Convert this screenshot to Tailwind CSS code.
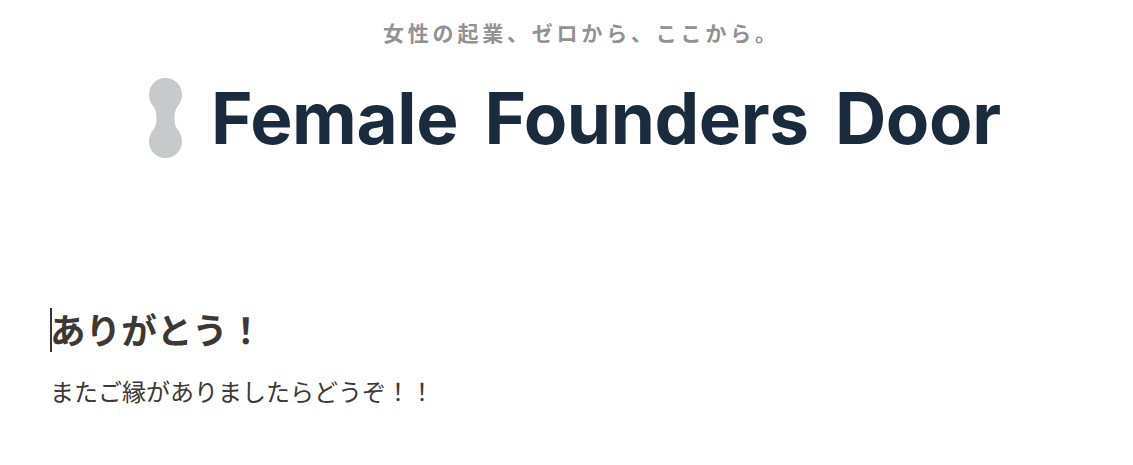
<!DOCTYPE html>
<html lang="ja"><head><meta charset="utf-8"><script src="https://cdn.jsdelivr.net/npm/@tailwindcss/browser@4"></script></head>
<body class="bg-white overflow-hidden">
<div class="w-[1133px] h-[465px] flex flex-col font-['Liberation_Sans','Noto_Sans_CJK_JP',sans-serif]">
  <header class="flex flex-col pl-[149px] h-[308px]">
    <p class="ml-[234px] pt-[20px] h-[78px] text-[21px] leading-[28px] font-bold tracking-[3.8px] text-[#929292] whitespace-nowrap">女性の起業、ゼロから、ここから。</p>
    <div class="flex items-center gap-[29px] h-[80px]">
      <svg class="w-[33px] h-[80px] shrink-0" viewBox="0 0 33 80"><path fill="#c8c9cb" d="M16.500 0C7.400 0 0 7.400 0 16.500C0 22 2.400 25.800 4.500 28.400C6.500 31 7.500 35 7.500 40C7.500 45 6.500 49 4.500 51.600C2.400 54.200 0 58 0 63.500C0 72.600 7.400 80 16.500 80S33 72.600 33 63.500C33 58 30.600 54.200 28.500 51.600C26.500 49 25.500 45 25.500 40C25.500 35 26.500 31 28.500 28.400C30.600 25.800 33 22 33 16.500C33 7.400 25.600 0 16.500 0Z"/></svg>
      <span class="font-['Inter',sans-serif] text-[71px] leading-[80px] font-bold tracking-[-0.4px] [word-spacing:10px] text-[#1a2b3e] whitespace-nowrap">Female Founders Door</span>
    </div>
  </header>
  <main class="pl-[50px]">
    <h1 class="border-l-2 border-[#3a3530] h-[44px] text-[35.6px] leading-[44px] [text-indent:-2px] pt-[2px] font-bold text-[#3c3833] whitespace-nowrap">ありがとう！</h1>
    <p class="mt-[26px] text-[24px] leading-[30px] text-[#3c3833] whitespace-nowrap">またご縁がありましたらどうぞ！！</p>
  </main>
</div>
</body></html>
